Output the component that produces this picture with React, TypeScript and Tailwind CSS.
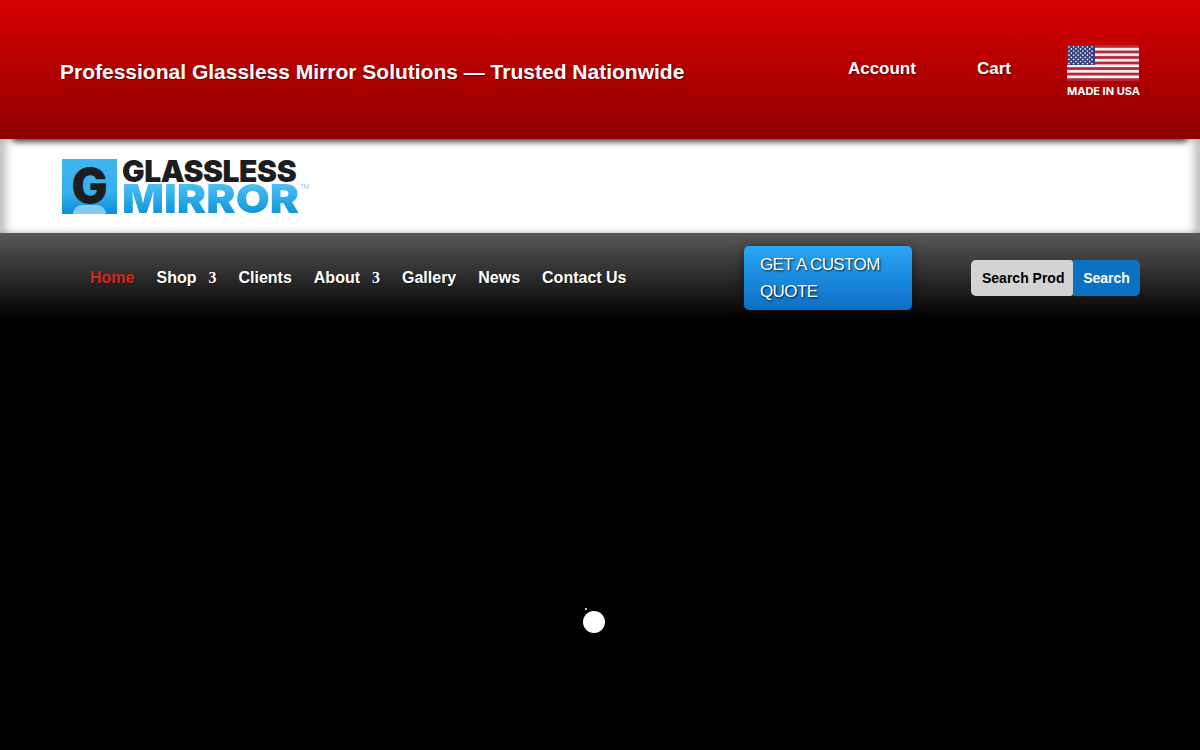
import React from 'react';

const navItems = [
  { label: 'Home', active: true },
  { label: 'Shop', caret: true },
  { label: 'Clients' },
  { label: 'About', caret: true },
  { label: 'Gallery' },
  { label: 'News' },
  { label: 'Contact Us' },
];

function Flag() {
  const stars = [];
  for (let row = 0; row < 9; row++) {
    const count = row % 2 === 0 ? 6 : 5;
    for (let col = 0; col < count; col++) {
      const x = (row % 2 === 0 ? 2 : 4.3) + col * 4.6;
      stars.push(<circle key={`${row}-${col}`} cx={x} cy={1.8 + row * 2.1} r="0.85" fill="#eceef6" />);
    }
  }
  return (
    <svg width="72" height="36" viewBox="0 0 72 36" className="block">
      <rect width="72" height="36" fill="#f7eef0" />
      {[0, 1, 2, 3, 4, 5, 6].map((i) => (
        <rect key={i} x="0" y={i * 5.54} width="72" height="2.77" fill="#b5283c" />
      ))}
      <rect width="28" height="20" fill="#36407a" />
      {stars}
    </svg>
  );
}

function Logo() {
  return (
    <div className="flex items-start gap-[5px] font-['Inter',sans-serif]">
      <div className="relative flex flex-col justify-end items-center w-[55px] h-[55px] bg-[linear-gradient(to_bottom,#3fb6ef_0%,#38b0ec_60%,#0a8ed6_100%)]">
        <span className="absolute inset-x-0 top-[5px] text-center text-[48px] leading-[44px] font-black text-[#1d1d1f]">
          G
        </span>
        <div className="w-[33px] h-[9px] rounded-t-[16px] bg-[#7fcdf3]" />
      </div>
      <div className="relative flex flex-col">
        <span className="text-[30px] leading-[24px] h-[25px] font-black text-[#1d1d1f] tracking-[-0.4px] whitespace-nowrap">
          GLASSLESS
        </span>
        <div className="h-[30px] w-[178px]">
          <span className="inline-block origin-left scale-x-[1.1] text-[40px] leading-[30px] font-black whitespace-nowrap bg-[linear-gradient(to_bottom,#4cc0f5,#0f95da)] bg-clip-text text-transparent">
            MIRROR
          </span>
        </div>
        <span className="absolute left-[178px] top-[25px] text-[6px] leading-[6px] text-[#9ccbe2]">TM</span>
      </div>
    </div>
  );
}

export default function App() {
  return (
    <div className="relative min-h-[750px] bg-black font-['Liberation_Sans',Arial,sans-serif] overflow-hidden">
      {/* Top bar */}
      <div className="relative z-10 h-[139px] flex items-center justify-between pl-[60px] pr-[60px] pt-[4px] bg-[linear-gradient(to_bottom,#d80000,#8f0000)] [box-shadow:0_16px_6px_-13px_rgba(0,0,0,0.65)]">
        <p className="text-[21px] font-bold text-white [text-shadow:1px_1px_2px_rgba(0,0,0,0.45)] whitespace-nowrap">
          Professional Glassless Mirror Solutions — Trusted Nationwide
        </p>
        <div className="flex items-center">
          <a className="text-[17px] font-bold text-white [text-shadow:1px_1px_2px_rgba(0,0,0,0.45)] mb-[5px]">Account</a>
          <a className="ml-[61px] text-[17px] font-bold text-white [text-shadow:1px_1px_2px_rgba(0,0,0,0.45)] mb-[5px]">Cart</a>
          <div className="ml-[56px] flex flex-col items-center">
            <Flag />
            <span className="mt-[3px] text-[11px] leading-[14px] font-bold text-white font-['Inter',sans-serif] whitespace-nowrap">
              MADE IN USA
            </span>
          </div>
        </div>
      </div>

      {/* Logo band */}
      <div className="h-[94px] bg-white pl-[62px] pt-[20px] [box-shadow:inset_8px_0_8px_-2px_rgba(0,0,0,0.25),inset_-8px_0_8px_-2px_rgba(0,0,0,0.25)]">
        <Logo />
      </div>

      {/* Nav */}
      <div className="h-[87px] flex items-start pl-[90px] pr-[60px] bg-[linear-gradient(to_bottom,#585858,#000000)]">
        <nav className="flex items-center gap-[22px] h-[36px] mt-[27px]">
          {navItems.map((item) => (
            <a
              key={item.label}
              className={`flex items-center text-[16px] font-bold whitespace-nowrap [text-shadow:1px_1px_1px_rgba(0,0,0,0.4)] ${item.active ? 'text-[#d42a20]' : 'text-white'}`}
            >
              {item.label}
              {item.caret && <span className="ml-[12px] font-['Liberation_Serif',serif] text-[16px]">3</span>}
            </a>
          ))}
        </nav>
        <a className="ml-auto mt-[13px] w-[168px] h-[64px] rounded-[5px] pl-[16px] pr-[8px] pt-[5px] text-[17px] leading-[27px] tracking-[-0.6px] text-white bg-[linear-gradient(to_bottom,#2ba6f4,#0b6fc4)] [text-shadow:1px_1px_2px_rgba(0,0,0,0.85)] [box-shadow:0_2px_12px_rgba(0,0,0,0.5)]">
          GET A CUSTOM QUOTE
        </a>
        <div className="ml-[59px] mt-[27px] flex h-[36px]">
          <div className="w-[102px] rounded-l-[5px] rounded-r-[3px] bg-[#d3d3d3] pl-[11px] text-[14px] leading-[36px] font-bold text-black whitespace-nowrap overflow-hidden">
            Search Prod
          </div>
          <button className="w-[67px] rounded-r-[5px] bg-[#0c71c3] text-[14px] font-bold text-white">Search</button>
        </div>
      </div>

      {/* Loading dots */}
      <div className="absolute left-[583px] top-[611px] w-[22px] h-[22px] rounded-full bg-white" />
      <div className="absolute left-[585px] top-[608px] w-[2px] h-[2px] rounded-full bg-white" />
    </div>
  );
}
